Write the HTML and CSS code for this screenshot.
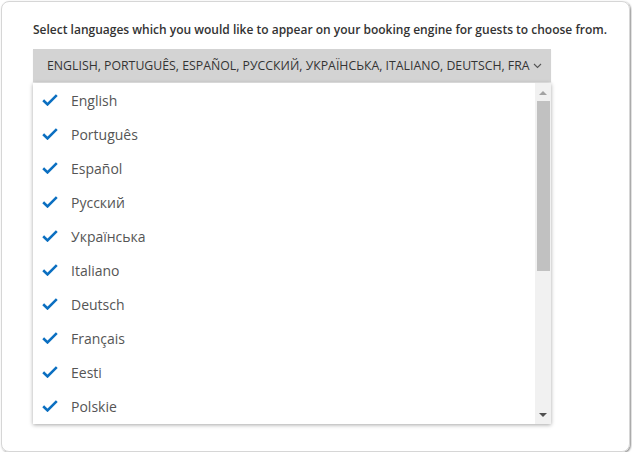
FILE: index.html
```html
<!DOCTYPE html>
<html>
<head>
<meta charset="utf-8">
<link rel="stylesheet" href="styles.css">
</head>
<body>
<div class="card">
  <p class="label">Select languages which you would like to appear on your booking engine for guests to choose from.</p>
  <div class="picker">
    <div class="select">
      <span class="select-text">ENGLISH, PORTUGUÊS, ESPAÑOL, РУССКИЙ, УКРАЇНСЬКА, ITALIANO, DEUTSCH, FRA</span>
      <svg class="chev" width="9" height="6" viewBox="0 0 9 6"><path d="M1 1l3.5 3.5L8 1" fill="none" stroke="#555" stroke-width="1.1"/></svg>
    </div>
    <div class="dropdown">
      <ul class="list">
        <li class="item"><svg class="check" viewBox="0 0 16 12"><path d="M1.2 6.2l4.3 4.2L14.8 1.2" fill="none" stroke="#0b6fc1" stroke-width="2.6"/></svg><span>English</span></li>
        <li class="item"><svg class="check" viewBox="0 0 16 12"><path d="M1.2 6.2l4.3 4.2L14.8 1.2" fill="none" stroke="#0b6fc1" stroke-width="2.6"/></svg><span>Português</span></li>
        <li class="item"><svg class="check" viewBox="0 0 16 12"><path d="M1.2 6.2l4.3 4.2L14.8 1.2" fill="none" stroke="#0b6fc1" stroke-width="2.6"/></svg><span>Español</span></li>
        <li class="item"><svg class="check" viewBox="0 0 16 12"><path d="M1.2 6.2l4.3 4.2L14.8 1.2" fill="none" stroke="#0b6fc1" stroke-width="2.6"/></svg><span>Русский</span></li>
        <li class="item"><svg class="check" viewBox="0 0 16 12"><path d="M1.2 6.2l4.3 4.2L14.8 1.2" fill="none" stroke="#0b6fc1" stroke-width="2.6"/></svg><span>Українська</span></li>
        <li class="item"><svg class="check" viewBox="0 0 16 12"><path d="M1.2 6.2l4.3 4.2L14.8 1.2" fill="none" stroke="#0b6fc1" stroke-width="2.6"/></svg><span>Italiano</span></li>
        <li class="item"><svg class="check" viewBox="0 0 16 12"><path d="M1.2 6.2l4.3 4.2L14.8 1.2" fill="none" stroke="#0b6fc1" stroke-width="2.6"/></svg><span>Deutsch</span></li>
        <li class="item"><svg class="check" viewBox="0 0 16 12"><path d="M1.2 6.2l4.3 4.2L14.8 1.2" fill="none" stroke="#0b6fc1" stroke-width="2.6"/></svg><span>Français</span></li>
        <li class="item"><svg class="check" viewBox="0 0 16 12"><path d="M1.2 6.2l4.3 4.2L14.8 1.2" fill="none" stroke="#0b6fc1" stroke-width="2.6"/></svg><span>Eesti</span></li>
        <li class="item"><svg class="check" viewBox="0 0 16 12"><path d="M1.2 6.2l4.3 4.2L14.8 1.2" fill="none" stroke="#0b6fc1" stroke-width="2.6"/></svg><span>Polskie</span></li>
      </ul>
      <div class="scrollbar">
        <div class="arrow-up"></div>
        <div class="thumb"></div>
        <div class="arrow-down"></div>
      </div>
    </div>
  </div>
</div>
</body>
</html>
```

FILE: styles.css
```css
* { box-sizing: border-box; }
html, body { margin: 0; padding: 0; background: #fff; }
body { padding: 1px 0 0 1px; font-family: "Open Sans", "Liberation Sans", sans-serif; }
.card {
  width: 629px;
  height: 451px;
  border: 1px solid #d6d6d6;
  border-radius: 8px;
  box-shadow: 1px 1px 2px rgba(0,0,0,0.45);
  padding: 20px 0 0 31px;
}
.label {
  margin: 0;
  font-size: 12px;
  font-weight: 600;
  color: #333;
  line-height: 15px;
  white-space: nowrap;
}
.picker { margin-top: 12px; width: 518px; }
.select {
  height: 33px;
  background: #d3d3d3;
  display: flex;
  align-items: center;
  padding: 0 9px 0 14px;
  box-shadow: 0 1px 1px rgba(0,0,0,0.08);
}
.select-text {
  white-space: nowrap;
  font-size: 12.3px;
  color: #333;
}
.chev { flex: none; margin-left: auto; }
.dropdown {
  margin-top: 1px;
  height: 341px;
  background: #fff;
  display: flex;
  box-shadow: 0 1px 4px rgba(0,0,0,0.35);
}
.list { list-style: none; margin: 0; padding: 0; flex: 1; overflow: hidden; }
.item {
  height: 34px;
  display: flex;
  align-items: center;
  padding-left: 9px;
  font-size: 14px;
  color: #555;
}
.check { width: 16px; height: 12px; margin-right: 13px; flex: none; }
.scrollbar {
  width: 16px;
  background: #f1f1f1;
  display: flex;
  flex-direction: column;
  align-items: center;
  padding: 0 1px;
}
.arrow-up {
  margin-top: 8px;
  width: 0; height: 0;
  border-left: 4px solid transparent;
  border-right: 4px solid transparent;
  border-bottom: 4px solid #a3a3a3;
}
.thumb {
  margin-top: 6px;
  width: 13px;
  height: 170px;
  background: #c1c1c1;
}
.arrow-down {
  margin-top: auto;
  margin-bottom: 7px;
  width: 0; height: 0;
  border-left: 4px solid transparent;
  border-right: 4px solid transparent;
  border-top: 4px solid #505050;
}
```
